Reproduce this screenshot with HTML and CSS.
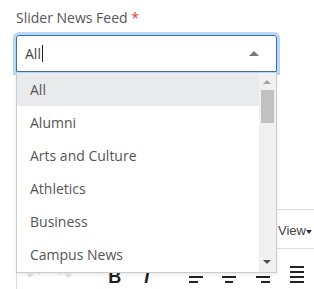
FILE: index.html
```html
<!DOCTYPE html>
<html lang="en">
<head>
    <meta charset="UTF-8">
    <meta name="viewport" content="width=device-width, initial-scale=1.0">
    <title>Slider News Feed</title>
    <link rel="stylesheet" href="styles.css">
</head>
<body>
    <div class="field">
        <label class="field-label">Slider News Feed <span class="req">*</span></label>
        <div class="combo">
            <span class="combo-value">All</span><span class="caret"></span>
            <span class="combo-arrow"></span>
        </div>

        <div class="dropdown">
            <ul class="options">
                <li class="option active">All</li>
                <li class="option">Alumni</li>
                <li class="option">Arts and Culture</li>
                <li class="option">Athletics</li>
                <li class="option">Business</li>
                <li class="option">Campus News</li>
            </ul>
            <div class="scrollbar">
                <span class="sb-up"></span>
                <span class="sb-thumb"></span>
                <span class="sb-down"></span>
            </div>
        </div>
    </div>

    <div class="editor">
        <div class="menubar">
            <span class="menu-item">View<span class="menu-caret"></span></span>
        </div>
        <div class="toolbar">
            <span class="tb-btn faint">&#8630;</span>
            <span class="tb-btn faint">&#8631;</span>
            <span class="tb-btn bold">B</span>
            <span class="tb-btn italic">I</span>
            <span class="tb-btn align first">
                <svg width="16" height="18" viewBox="0 0 16 18"><path d="M1 2h14M1 7h9M1 12h14M1 17h9" stroke="#222" stroke-width="2"/></svg>
            </span>
            <span class="tb-btn align">
                <svg width="16" height="18" viewBox="0 0 16 18"><path d="M1 2h14M4 7h8M1 12h14M4 17h8" stroke="#222" stroke-width="2"/></svg>
            </span>
            <span class="tb-btn align">
                <svg width="16" height="18" viewBox="0 0 16 18"><path d="M1 2h14M6 7h9M1 12h14M6 17h9" stroke="#222" stroke-width="2"/></svg>
            </span>
            <span class="tb-btn align">
                <svg width="16" height="18" viewBox="0 0 16 18"><path d="M1 2h14M1 7h14M1 12h14M1 17h14" stroke="#222" stroke-width="2"/></svg>
            </span>
        </div>
    </div>
</body>
</html>
```

FILE: styles.css
```css
body {
    margin: 0;
    padding: 0 0 0 16px;
    background: #fff;
    font-family: "Open Sans", Arial, sans-serif;
    color: #555;
    overflow: hidden;
}
.field {
    position: relative;
    width: 261px;
    padding-top: 9px;
}
.field-label {
    display: block;
    font-size: 14px;
    line-height: 18px;
    color: #555;
    margin-bottom: 8px;
}
.req {
    color: #e0403a;
}
.combo {
    position: relative;
    height: 35px;
    border: 1px solid #3d6ea6;
    border-radius: 3px 3px 0 0;
    box-shadow: 0 0 0 3px #b9d8f5;
    display: flex;
    align-items: center;
    padding-left: 8px;
    font-size: 14px;
    color: #444;
}
.caret {
    display: inline-block;
    width: 1px;
    height: 17px;
    background: #222;
    margin-left: 1px;
}
.combo-arrow {
    position: absolute;
    right: 17px;
    top: 15px;
    width: 0;
    height: 0;
    border-left: 5px solid transparent;
    border-right: 5px solid transparent;
    border-bottom: 5px solid #777;
}
.dropdown {
    position: absolute;
    top: 73px;
    left: 0;
    width: 259px;
    height: 199px;
    background: #fff;
    border: 1px solid #ccc;
    border-top: none;
    box-shadow: 0 2px 4px rgba(0,0,0,0.08);
    display: flex;
    z-index: 2;
}
.options {
    list-style: none;
    margin: 0;
    padding: 0;
    flex: 1;
}
.option {
    height: 33px;
    line-height: 33px;
    padding-left: 13px;
    font-size: 14px;
    color: #555;
}
.option.active {
    background: #e9eaeb;
}
.scrollbar {
    position: relative;
    width: 17px;
    background: #f0f0f0;
}
.sb-up, .sb-down {
    position: absolute;
    left: 4px;
    width: 0;
    height: 0;
    border-left: 4px solid transparent;
    border-right: 4px solid transparent;
}
.sb-up {
    top: 7px;
    border-bottom: 4px solid #a3a3a3;
}
.sb-down {
    bottom: 8px;
    border-top: 4px solid #505050;
}
.sb-thumb {
    position: absolute;
    left: 2px;
    top: 17px;
    width: 13px;
    height: 33px;
    background: #c1c1c1;
}
.editor {
    margin-top: 137px;
    border-left: 1px solid #ddd;
    border-top: 1px solid #ddd;
    height: 200px;
    font-family: "Liberation Sans", Arial, sans-serif;
}
.menubar {
    height: 35px;
    padding-top: 3px;
    border-bottom: 1px solid #ddd;
    display: flex;
    justify-content: flex-end;
    align-items: center;
    padding-right: 2px;
}
.menu-item {
    font-size: 13px;
    color: #444;
}
.menu-caret {
    display: inline-block;
    vertical-align: middle;
    border-left: 3.5px solid transparent;
    border-right: 3.5px solid transparent;
    border-top: 4px solid #333;
}
.toolbar {
    display: flex;
    align-items: flex-start;
    height: 36px;
    padding-top: 16px;
}
.tb-btn {
    width: 34px;
    height: 18px;
    display: flex;
    justify-content: center;
    font-size: 17px;
    line-height: 18px;
    color: #222;
}
.tb-btn.faint {
    color: #e2e2e2;
    padding-top: 2px;
}
.tb-btn.bold {
    font-weight: bold;
    font-size: 18px;
    padding-top: 3px;
    margin-left: 18px;
}
.tb-btn.italic {
    font-style: italic;
    font-weight: bold;
    font-size: 18px;
    padding-top: 3px;
}
.tb-btn.align {
    width: 36px;
}
.tb-btn.align.first {
    margin-left: 16px;
}
```
